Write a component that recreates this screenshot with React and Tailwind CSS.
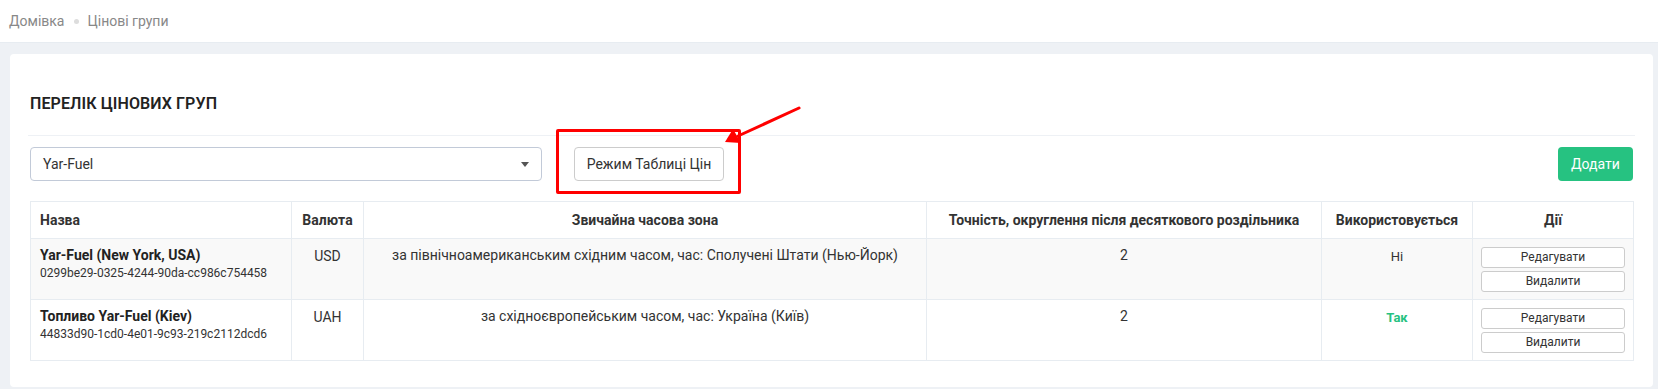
import React from "react";

const rows = [
  {
    name: "Yar-Fuel (New York, USA)",
    id: "0299be29-0325-4244-90da-cc986c754458",
    cur: "USD",
    zone: "за північноамериканським східним часом, час: Сполучені Штати (Нью-Йорк)",
    prec: "2",
    used: false,
    bg: "bg-[#f9f9f9]",
  },
  {
    name: "Топливо Yar-Fuel (Kiev)",
    id: "44833d90-1cd0-4e01-9c93-219c2112dcd6",
    cur: "UAH",
    zone: "за східноєвропейським часом, час: Україна (Київ)",
    prec: "2",
    used: true,
    bg: "bg-white",
  },
];

export default function App() {
  return (
    <div
      className="relative min-h-[389px] bg-[#eef1f5] text-[#333]"
      style={{ fontFamily: "Roboto, 'Open Sans', Arial, sans-serif" }}
    >
      {/* breadcrumb */}
      <div className="h-[43px] bg-white flex items-center pl-[9px] text-[14px] text-[#888] border-b border-[#e7ecf1]">
        <span>Домівка</span>
        <span className="mx-[9px] w-[5px] h-[5px] rounded-full bg-[#ddd]" />
        <span>Цінові групи</span>
      </div>

      <div className="pl-[10px] pr-[5px] pt-[11px] pb-[3px]">
        <div className="bg-white rounded-[4px] px-[20px] pt-[40px] pb-[26px]">
          <div className="text-[16px] font-semibold leading-[20px] text-[#222] tracking-[0.1px]">
            ПЕРЕЛІК ЦІНОВИХ ГРУП
          </div>
          <div className="mt-[21px] h-px bg-[#eef1f5] -mx-[2px]" />

          <div className="mt-[11px] flex items-center">
            <div className="w-[512px] h-[34px] border border-[#c2cad8] rounded-[4px] flex items-center justify-between pl-[12px] pr-[12px] text-[14px] text-[#333]">
              <span>Yar-Fuel</span>
              <span className="w-0 h-0 border-l-[4px] border-r-[4px] border-t-[5px] border-l-transparent border-r-transparent border-t-[#555]" />
            </div>
            <button className="ml-[32px] w-[150px] h-[34px] border border-[#ccc] rounded-[4px] bg-white text-[14px] text-[#333]">
              Режим Таблиці Цін
            </button>
            <div className="flex-1" />
            <button className="w-[75px] h-[34px] rounded-[4px] bg-[#26c281] text-white text-[14px]">
              Додати
            </button>
          </div>

          <table className="mt-[20px] w-[1603px] border-collapse table-fixed text-[14px]">
            <colgroup>
              <col className="w-[261px]" />
              <col className="w-[72px]" />
              <col className="w-[563px]" />
              <col className="w-[395px]" />
              <col className="w-[151px]" />
              <col className="w-[161px]" />
            </colgroup>
            <thead>
              <tr className="leading-[20px] font-bold text-[#333]">
                <th className="border border-[#e7ecf1] text-left pl-[9px] pt-[8px] pb-[8px]">Назва</th>
                <th className="border border-[#e7ecf1] text-center pt-[8px] pb-[8px]">Валюта</th>
                <th className="border border-[#e7ecf1] text-center pt-[8px] pb-[8px]">Звичайна часова зона</th>
                <th className="border border-[#e7ecf1] text-center pt-[8px] pb-[8px]">Точність, округлення після десяткового роздільника</th>
                <th className="border border-[#e7ecf1] text-center pt-[8px] pb-[8px]">Використовується</th>
                <th className="border border-[#e7ecf1] text-center pt-[8px] pb-[8px]">Дії</th>
              </tr>
            </thead>
            <tbody>
              {rows.map((r) => (
                <tr key={r.id} className={r.bg}>
                  <td className="border border-[#e7ecf1] align-top pl-[9px] pt-[6px]">
                    <div className="font-bold leading-[20px] text-[#222]">{r.name}</div>
                    <div className="text-[12px] leading-[17px] text-[#333]">{r.id}</div>
                  </td>
                  <td className="border border-[#e7ecf1] align-top text-center pt-[7px] leading-[20px]">{r.cur}</td>
                  <td className="border border-[#e7ecf1] align-top text-center pt-[6px] leading-[20px]">{r.zone}</td>
                  <td className="border border-[#e7ecf1] align-top text-center pt-[6px] leading-[20px]">{r.prec}</td>
                  <td className="border border-[#e7ecf1] align-top text-center pt-[8px] leading-[20px] text-[13px]">
                    {r.used ? (
                      <span className="font-bold text-[#26c281]">Так</span>
                    ) : (
                      <span>Ні</span>
                    )}
                  </td>
                  <td className="border border-[#e7ecf1] align-top px-[8px] pt-[8px] pb-[7px]">
                    <div className="flex flex-col gap-[3px]">
                      <button className="h-[21px] w-full border border-[#ccc] rounded-[3px] bg-white text-[12px] leading-[19px] text-[#333]">
                        Редагувати
                      </button>
                      <button className="h-[21px] w-full border border-[#ccc] rounded-[3px] bg-white text-[12px] leading-[19px] text-[#333]">
                        Видалити
                      </button>
                    </div>
                  </td>
                </tr>
              ))}
            </tbody>
          </table>
        </div>
      </div>

      {/* annotation */}
      <div className="absolute left-[556px] top-[129px] w-[185px] h-[65px] border-[3px] border-[#ff0000] rounded-[2px] pointer-events-none" />
      <svg className="absolute left-0 top-0 pointer-events-none" width="1658" height="389">
        <line x1="799" y1="108" x2="738" y2="136" stroke="#ff0000" strokeWidth="3" strokeLinecap="round" />
        <polygon points="725,142 733,129 741,143" fill="#ff0000" />
      </svg>
    </div>
  );
}
